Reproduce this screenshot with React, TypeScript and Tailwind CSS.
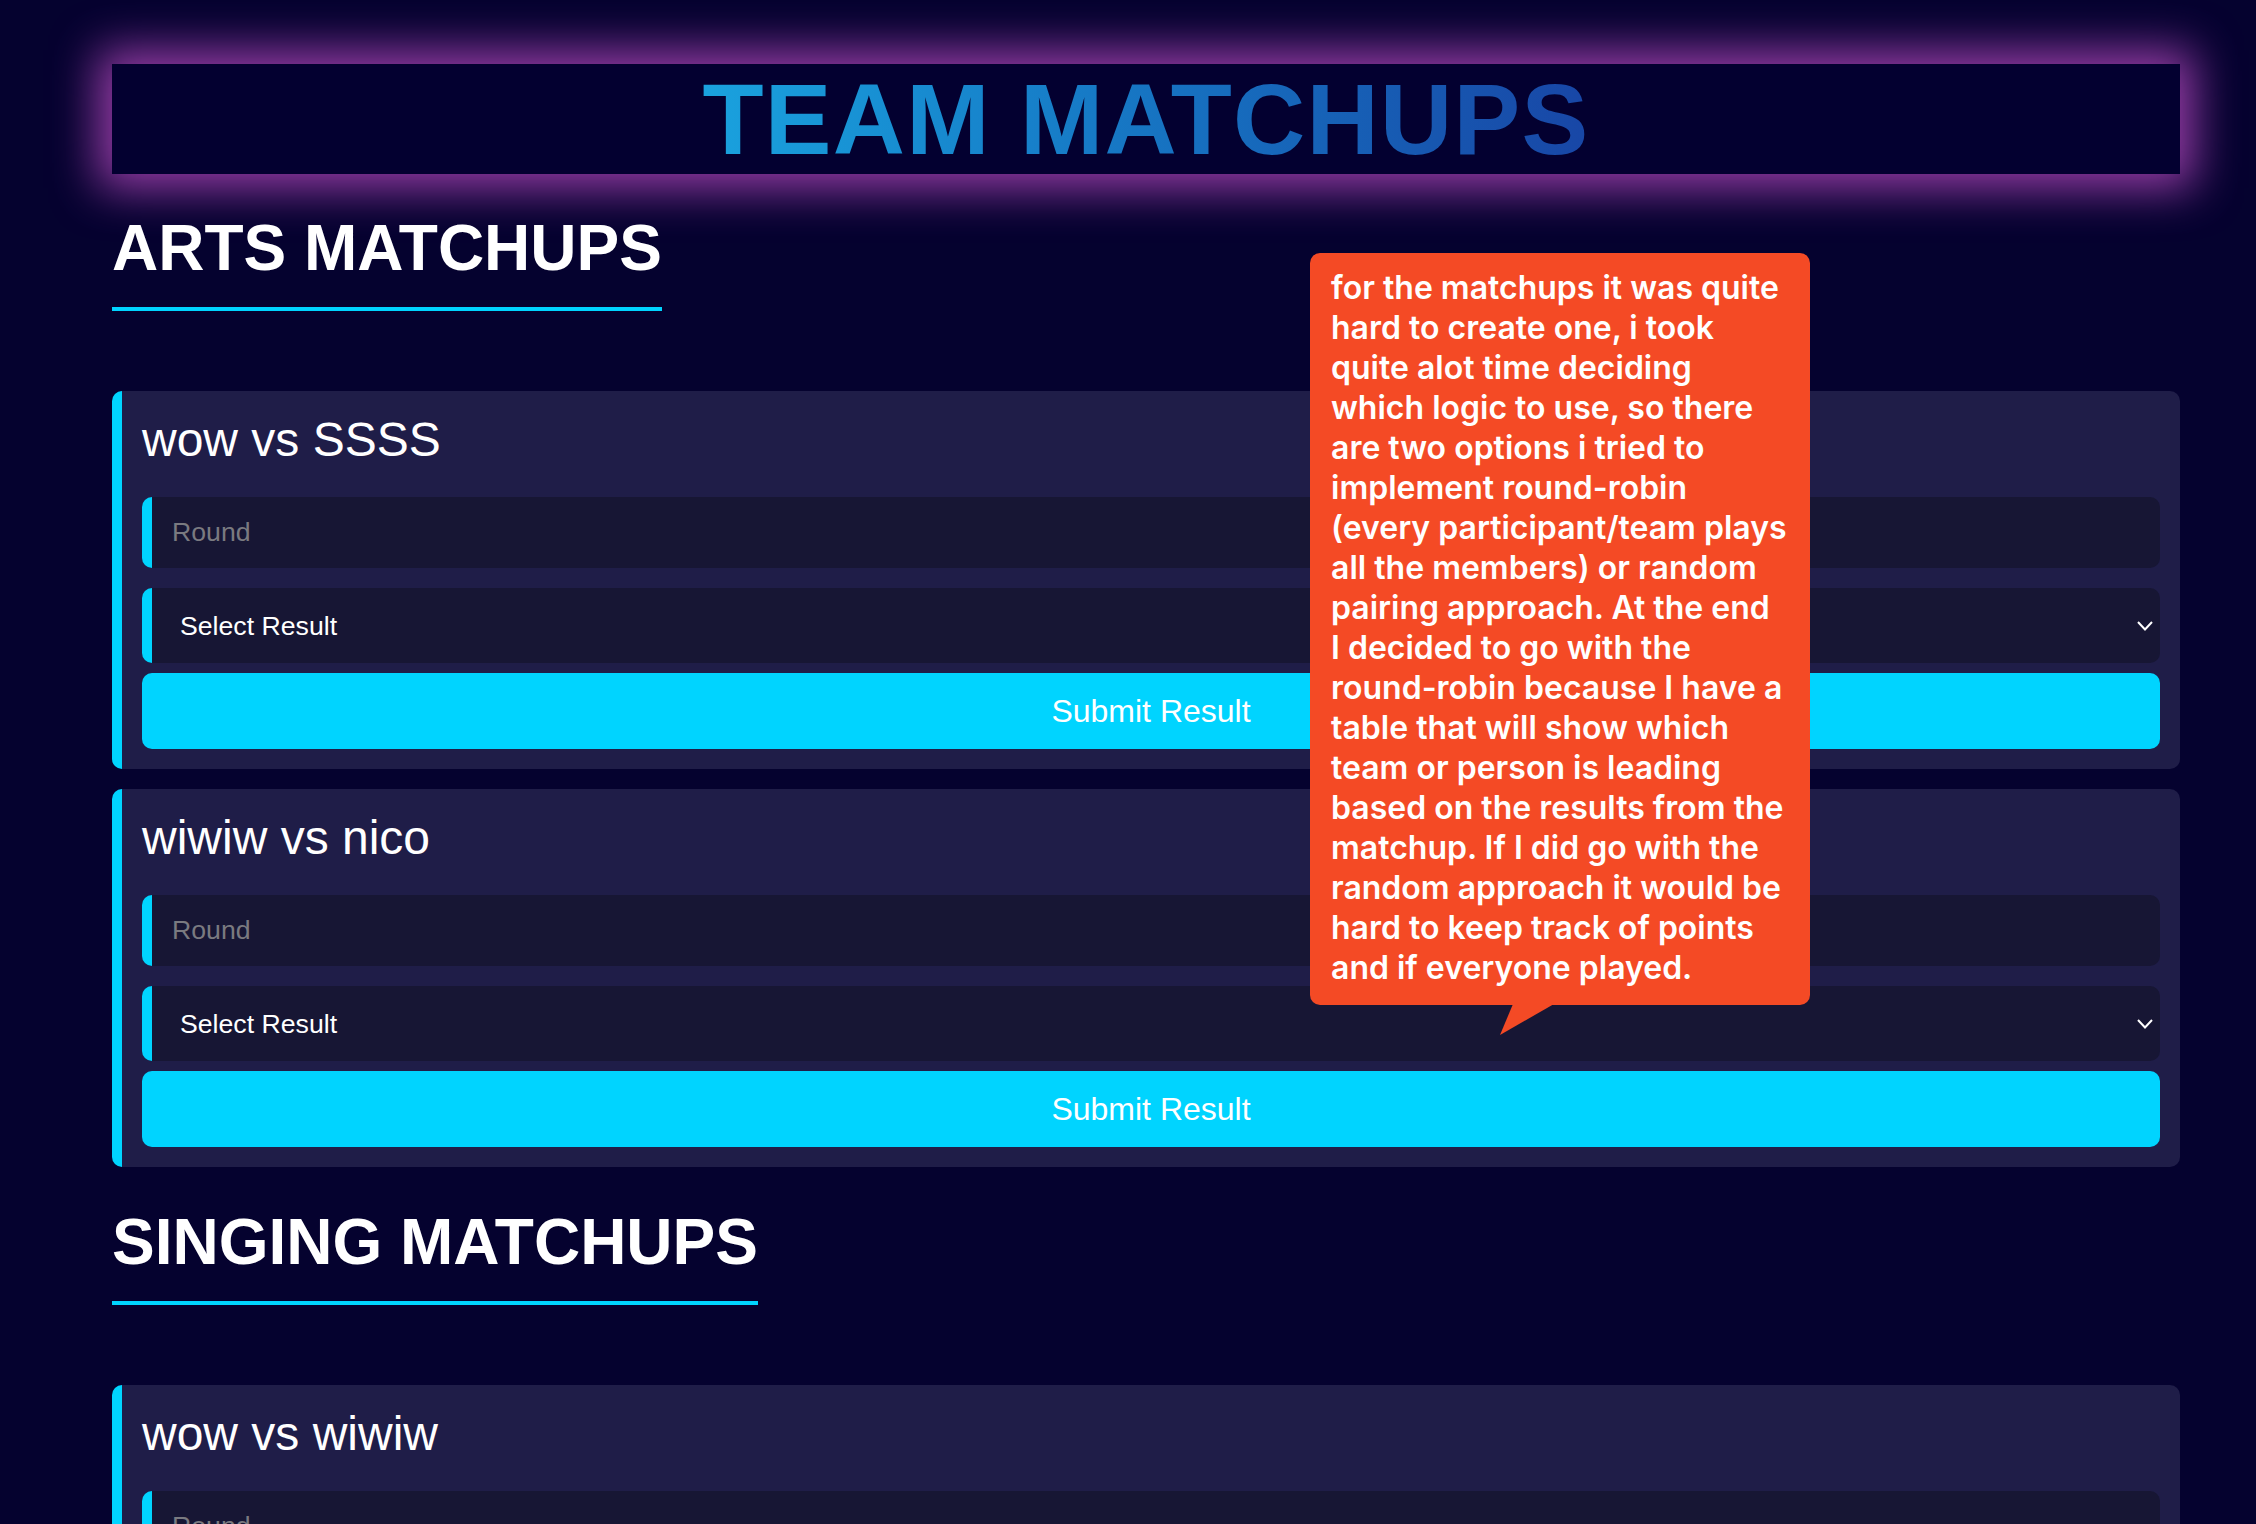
import React from 'react';

interface Matchup {
  id: string;
  teamA: string;
  teamB: string;
}

const arts: Matchup[] = [
  { id: 'a1', teamA: 'wow', teamB: 'SSSS' },
  { id: 'a2', teamA: 'wiwiw', teamB: 'nico' },
];

const singing: Matchup[] = [{ id: 's1', teamA: 'wow', teamB: 'wiwiw' }];

const noteLines = [
  'for the matchups it was quite',
  'hard to create one, i took',
  'quite alot time deciding',
  'which logic to use, so there',
  'are two options i tried to',
  'implement round-robin',
  '(every participant/team plays',
  'all the members) or random',
  'pairing approach. At the end',
  'I decided to go with the',
  'round-robin because I have a',
  'table that will show which',
  'team or person is leading',
  'based on the results from the',
  'matchup. If I did go with the',
  'random approach it would be',
  'hard to keep track of points',
  'and if everyone played.',
];

function MatchCard({ match }: { match: Matchup }) {
  return (
    <div className="bg-[#1f1d48] border-l-[10px] border-[#00d4ff] rounded-[10px] pt-[21px] pb-[20px] px-[20px]">
      <h3 className="text-[48px] leading-[55px] text-white font-normal mb-[30px]">
        {match.teamA} vs {match.teamB}
      </h3>
      <input
        type="text"
        placeholder="Round"
        className="block w-full h-[71px] bg-[#171634] border-l-[10px] border-[#00d4ff] rounded-[10px] px-[20px] text-[26.67px] text-white placeholder:text-[#7a7a80] outline-none mb-[20px]"
      />
      {/* select look-alike, native arrow differs per platform */}
      <div className="flex items-center justify-between h-[75px] bg-[#171634] border-l-[10px] border-[#00d4ff] rounded-[10px] pl-[28px] pr-[7px] mb-[10px]">
        <span className="text-[26.67px] text-white">Select Result</span>
        <svg width="16" height="10" viewBox="0 0 16 10" fill="none">
          <polyline points="1,1 8,8.5 15,1" stroke="white" strokeWidth="2" />
        </svg>
      </div>
      <button className="block w-full h-[76px] bg-[#00d4ff] rounded-[10px] text-white text-[32px]">
        Submit Result
      </button>
    </div>
  );
}

function Section({ title, matches }: { title: string; matches: Matchup[] }) {
  return (
    <section>
      <h2 className="inline-block text-[64px] leading-[73px] font-bold text-white border-b-4 border-[#00d4ff] pb-[22px] mb-[80px]">
        {title}
      </h2>
      <div className="flex flex-col gap-[20px]">
        {matches.map((m) => (
          <MatchCard key={m.id} match={m} />
        ))}
      </div>
    </section>
  );
}

export default function App() {
  return (
    <div
      className="relative min-h-screen bg-[#05022f] pt-[64px] pb-[80px]"
      style={{ fontFamily: '"Liberation Sans", Arial, sans-serif' }}
    >
      <div className="ml-[112px] w-[2068px]">
        <header className="h-[110px] bg-[#030030] flex items-center justify-center shadow-[0_0_46px_14px_rgba(200,80,205,0.75)] mb-[38px]">
          <h1 className="text-[100px] leading-none font-bold tracking-[1.3px] bg-linear-to-r from-[#1aa2de] to-[#1846a6] bg-clip-text text-transparent">
            TEAM MATCHUPS
          </h1>
        </header>

        <Section title="ARTS MATCHUPS" matches={arts} />
        <div className="h-[39px]" />
        <Section title="SINGING MATCHUPS" matches={singing} />
      </div>

      {/* note bubble */}
      <div className="absolute left-[1310px] top-[253px] w-[500px]">
        <div
          className="bg-[#f44a25] rounded-[10px] px-[21px] pt-[15px] pb-[17px] text-white text-[32px] leading-[40px] font-semibold"
          style={{ fontFamily: 'Inter, "Noto Sans", sans-serif' }}
        >
          {noteLines.map((line, i) => (
            <div key={i} className="whitespace-nowrap">
              {line}
            </div>
          ))}
        </div>
        <svg className="absolute left-[189px] top-[751px]" width="56" height="32" viewBox="0 0 56 32">
          <polygon points="14,0 55,0 1,31" fill="#f44a25" />
        </svg>
      </div>
    </div>
  );
}
